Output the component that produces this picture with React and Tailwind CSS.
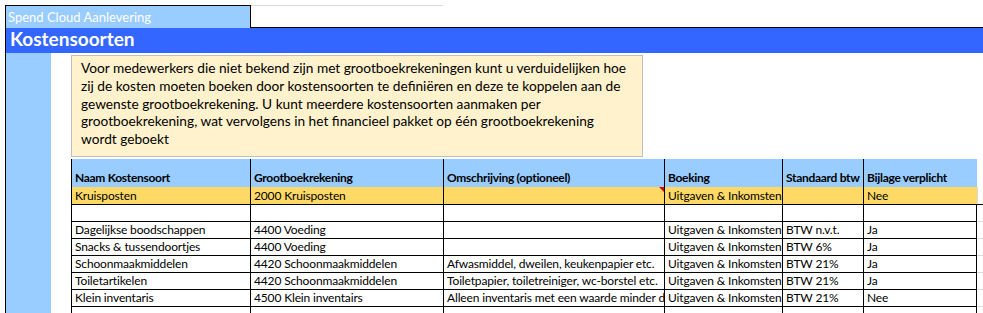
import React from "react";

const columns = [
  { label: "Naam Kostensoort", w: "w-[179px]" },
  { label: "Grootboekrekening", w: "w-[193px]" },
  { label: "Omschrijving (optioneel)", w: "w-[221px]" },
  { label: "Boeking", w: "w-[118px]" },
  { label: "Standaard btw", w: "w-[81px]" },
  { label: "Bijlage verplicht", w: "w-[113px]" },
];

const rows = [
  ["Dagelijkse boodschappen", "4400 Voeding", "", "Uitgaven & Inkomsten", "BTW n.v.t.", "Ja"],
  ["Snacks & tussendoortjes", "4400 Voeding", "", "Uitgaven & Inkomsten", "BTW 6%", "Ja"],
  ["Schoonmaakmiddelen", "4420 Schoonmaakmiddelen", "Afwasmiddel, dweilen, keukenpapier etc.", "Uitgaven & Inkomsten", "BTW 21%", "Ja"],
  ["Toiletartikelen", "4420 Schoonmaakmiddelen", "Toiletpapier, toiletreiniger, wc-borstel etc.", "Uitgaven & Inkomsten", "BTW 21%", "Ja"],
  ["Klein inventaris", "4500 Klein inventairs", "Alleen inventaris met een waarde minder dan", "Uitgaven & Inkomsten", "BTW 21%", "Nee"],
  ["", "", "", "", "", ""],
];

const intro = [
  "Voor medewerkers die niet bekend zijn met grootboekrekeningen kunt u verduidelijken hoe",
  "zij de kosten moeten boeken door kostensoorten te definiëren en deze te koppelen aan de",
  "gewenste grootboekrekening. U kunt meerdere kostensoorten aanmaken per",
  "grootboekrekening, wat vervolgens in het financieel pakket op één grootboekrekening",
  "wordt geboekt",
];

// spreadsheet cell: bottom-aligned text, clipped at the right edge
function Cell({ w, children, className = "" }) {
  return (
    <div className={`${w} shrink-0 flex items-end px-[3px] overflow-hidden whitespace-nowrap ${className}`}>
      <span className="leading-[14px]">{children}</span>
    </div>
  );
}

export default function App() {
  return (
    <div className="w-[983px] h-[313px] overflow-hidden bg-white pt-[5px] pl-[5px] font-['Lato',sans-serif] text-black">
      <div className="h-full border-l border-black flex flex-col">
        {/* sheet title */}
        <div className="flex h-[23px] shrink-0">
          <div className="w-[245px] bg-[#99CCFF] border-t border-r border-black text-white text-[13px] leading-[18px] px-[2px] pt-[2px]">
            Spend Cloud Aanlevering
          </div>
          <div className="flex-1 border-b border-black">
            <div className="w-[192px] border-t border-[#dadada]" />
          </div>
        </div>

        <div className="h-[25px] shrink-0 bg-[#3366FF] text-white font-bold text-[19px] leading-[20px] px-[4px] pt-[1px]">
          Kostensoorten
        </div>

        <div className="flex flex-1 min-h-0">
          <div className="w-[45px] shrink-0 bg-[#99CCFF]" />
          <div className="ml-[20px] flex flex-col pt-[2px]">
            {/* explanation note */}
            <div className="w-[572px] h-[102px] shrink-0 bg-[#FFF2CC] border border-[#bfbfbf] pl-[9px] pt-[3px] text-[13.7px] leading-[17.8px]">
              {intro.map((line) => (
                <div key={line} className="whitespace-nowrap">{line}</div>
              ))}
            </div>

            {/* cost types table */}
            <div className="mt-[2px] shrink-0 border-l border-black text-[12px] tracking-[-0.15px] w-[912px]">
              <div className="flex h-[28px]">
                {columns.map((c, i) => (
                  <Cell
                    key={c.label}
                    w={c.w}
                    className={`bg-[#99CCFF] font-bold tracking-[-0.3px] pb-[2px] ${i < 5 ? "border-r border-black" : ""}`}
                  >
                    {c.label}
                  </Cell>
                ))}
                <div className="flex-1" />
              </div>

              <div className="flex h-[18px] border-b border-black">
                <Cell w={columns[0].w} className="bg-[#FFD966] border-r border-black pb-[1px]">Kruisposten</Cell>
                <Cell w={columns[1].w} className="bg-[#FFD966] border-r border-black pb-[1px]">2000 Kruisposten</Cell>
                <div className={`${columns[2].w} shrink-0 bg-[#FFD966] border-r border-black relative`}>
                  {/* comment marker */}
                  <div className="absolute top-0 right-0 w-0 h-0 border-l-[5px] border-l-transparent border-t-[5px] border-t-[#e00000]" />
                </div>
                <Cell w={columns[3].w} className="bg-[#FFD966] border-r border-black pb-[1px]">Uitgaven &amp; Inkomsten</Cell>
                <Cell w={columns[4].w} className="bg-[#FFD966] border-r border-black pb-[1px]" />
                <Cell w={columns[5].w} className="bg-[#FFD966] pb-[1px]">Nee</Cell>
                <div className="flex-1 border-l border-[#dadada]" />
              </div>

              <div className="flex h-[17px]">
                {columns.map((c) => (
                  <div key={c.label} className={`${c.w} shrink-0 border-r border-b border-black`} />
                ))}
                <div className="flex-1 border-b border-[#dadada]" />
              </div>

              {rows.map((r, ri) => (
                <div key={ri} className="flex h-[17px]">
                  {r.map((v, ci) => (
                    <Cell key={ci} w={columns[ci].w} className="border-r border-b border-black pb-[1px]">
                      {v}
                    </Cell>
                  ))}
                  <div className="flex-1 border-b border-[#dadada]" />
                </div>
              ))}
            </div>
          </div>
        </div>
      </div>
    </div>
  );
}
